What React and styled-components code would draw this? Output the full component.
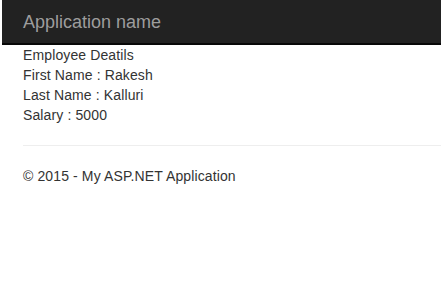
import React from "react";
import styled, { createGlobalStyle } from "styled-components";

const Global = createGlobalStyle`
  html, body { margin: 0; padding: 0; background: #fff; }
  body {
    font-family: "Liberation Sans", Arial, Helvetica, sans-serif;
    font-size: 14px;
    line-height: 20px;
    color: #333;
  }
`;

const Page = styled.div`
  padding: 0 2px;
`;

const Navbar = styled.header`
  height: 43px;
  background: #222;
  border-bottom: 2px solid #080808;
  display: flex;
  align-items: center;
  padding-left: 21px;
`;

const Brand = styled.span`
  font-size: 18px;
  line-height: 20px;
  color: #9d9d9d;
`;

const Body = styled.main`
  padding-left: 21px;
  letter-spacing: 0.12px;
`;

const Line = styled.div`
  line-height: 20px;
`;

const Rule = styled.hr`
  margin: 20px 0;
  border: 0;
  border-top: 1px solid #eee;
`;

const Footer = styled.footer`
  p { margin: 0; }
`;

export default function App() {
  return (
    <Page>
      <Global />
      <Navbar>
        <Brand>Application name</Brand>
      </Navbar>
      <Body>
        <Line>Employee Deatils</Line>
        <Line>First Name : Rakesh</Line>
        <Line>Last Name : Kalluri</Line>
        <Line>Salary : 5000</Line>
        <Rule />
        <Footer>
          <p>© 2015 - My ASP.NET Application</p>
        </Footer>
      </Body>
    </Page>
  );
}
